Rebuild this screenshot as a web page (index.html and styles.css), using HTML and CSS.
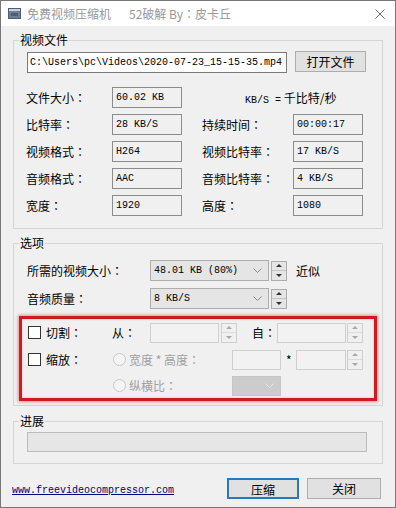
FILE: index.html
```html
<!DOCTYPE html>
<html>
<head>
<meta charset="utf-8">
<title>免费视频压缩机</title>
<link rel="stylesheet" href="styles.css">
</head>
<body>
<div class="window">
  <div class="titlebar">
    <svg class="app-icon" width="13" height="11" viewBox="0 0 13 11">
      <rect x="0.5" y="0.5" width="12" height="10" fill="#6b7f96" stroke="#4d5f74"/>
      <rect x="1" y="1" width="11" height="2" fill="#c9d3de"/>
      <rect x="3" y="5" width="7" height="3" fill="#4d5f74"/>
    </svg>
    <span class="title">免费视频压缩机</span>
    <span class="title title-sub">52破解 By<span class="colon">：</span>皮卡丘</span>
    <svg class="close" width="10" height="10" viewBox="0 0 10 10">
      <path d="M0.5 0.5 L9.5 9.5 M9.5 0.5 L0.5 9.5" stroke="#666" stroke-width="1" fill="none"/>
    </svg>
  </div>

  <fieldset class="group group-file">
    <legend>视频文件</legend>
    <div class="path-row">
      <div class="textbox path">C:\Users\pc\Videos\2020-07-23_15-15-35.mp4</div>
      <button class="btn btn-open">打开文件</button>
    </div>
    <div class="info-grid">
      <span class="lbl">文件大小<span class="colon">：</span></span><div class="field">60.02 KB</div><span></span><span class="note"><span class="note-mono">KB/S =</span> 千比特/秒</span>
      <span class="lbl">比特率<span class="colon">：</span></span><div class="field">28 KB/S</div><span></span><span class="lbl">持续时间<span class="colon">：</span></span><div class="field">00:00:17</div>
      <span class="lbl">视频格式<span class="colon">：</span></span><div class="field">H264</div><span></span><span class="lbl">视频比特率<span class="colon">：</span></span><div class="field">17 KB/S</div>
      <span class="lbl">音频格式<span class="colon">：</span></span><div class="field">AAC</div><span></span><span class="lbl">音频比特率<span class="colon">：</span></span><div class="field">4 KB/S</div>
      <span class="lbl">宽度<span class="colon">：</span></span><div class="field">1920</div><span></span><span class="lbl">高度<span class="colon">：</span></span><div class="field">1080</div>
    </div>
  </fieldset>

  <fieldset class="group group-opts">
    <legend>选项</legend>
    <div class="opt-row">
      <span class="opt-lbl">所需的视频大小<span class="colon">：</span></span>
      <div class="combo"><span class="combo-text">48.01 KB (80%)</span>
        <svg class="chev" width="9" height="5" viewBox="0 0 9 5"><path d="M0.5 0.5 L4.5 4.5 L8.5 0.5" stroke="#8a8a8a" fill="none"/></svg>
      </div>
      <div class="spin"><span class="up"></span><span class="down"></span></div>
      <span class="approx">近似</span>
    </div>
    <div class="opt-row">
      <span class="opt-lbl">音频质量<span class="colon">：</span></span>
      <div class="combo"><span class="combo-text">8 KB/S</span>
        <svg class="chev" width="9" height="5" viewBox="0 0 9 5"><path d="M0.5 0.5 L4.5 4.5 L8.5 0.5" stroke="#8a8a8a" fill="none"/></svg>
      </div>
      <div class="spin"><span class="up"></span><span class="down"></span></div>
    </div>

    <div class="redbox">
      <div class="cut-row">
        <label class="cb-cell"><span class="check"></span><span>切割<span class="colon">：</span></span></label>
        <span class="from-lbl">从<span class="colon">：</span></span>
        <div class="dis-input w69"></div>
        <div class="spin spin-dis gap2"><span class="up"></span><span class="down"></span></div>
        <span class="to-lbl">自<span class="colon">：</span></span>
        <div class="dis-input w69"></div>
        <div class="spin spin-dis gap1"><span class="up"></span><span class="down"></span></div>
      </div>
      <div class="cut-row">
        <label class="cb-cell"><span class="check"></span><span>缩放<span class="colon">：</span></span></label>
        <span class="radio-cell"><span class="radio"></span><span class="dis-text">宽度 * 高度<span class="colon">：</span></span></span>
        <div class="dis-input w49"></div>
        <span class="star">*</span>
        <div class="dis-input w50"></div>
        <div class="spin spin-dis gap1"><span class="up"></span><span class="down"></span></div>
      </div>
      <div class="cut-row row-last">
        <span class="cb-cell"></span>
        <span class="radio-cell"><span class="radio"></span><span class="dis-text">纵横比<span class="colon">：</span></span></span>
        <div class="dis-combo">
          <svg class="chev" width="9" height="5" viewBox="0 0 9 5"><path d="M0.5 0.5 L4.5 4.5 L8.5 0.5" stroke="#e6e6e6" fill="none"/></svg>
        </div>
      </div>
    </div>
  </fieldset>

  <fieldset class="group group-prog">
    <legend>进展</legend>
    <div class="progress"></div>
  </fieldset>

  <div class="bottom-bar">
    <a class="site-link" href="#">www.freevideocompressor.com</a>
    <button class="btn btn-primary">压缩</button>
    <button class="btn btn-close">关闭</button>
  </div>
</div>
</body>
</html>
```

FILE: styles.css
```css
* { box-sizing: border-box; }
html, body { margin: 0; padding: 0; }
body {
  width: 396px;
  height: 508px;
  overflow: hidden;
  background: #f0f0f0;
  font-family: "Noto Sans CJK SC", "Microsoft YaHei", sans-serif;
  font-size: 12px;
  color: #000;
}
.window {
  width: 396px;
  height: 508px;
  border: 1px solid #777;
  background: #f0f0f0;
}
.colon { font-family: "Noto Sans CJK JP", "Noto Sans CJK SC", sans-serif; }

/* title bar */
.titlebar {
  height: 25px;
  background: #fff;
  display: flex;
  align-items: center;
  padding-left: 7px;
}
.app-icon { display: block; margin-right: 6px; }
.title { color: #999; line-height: 16px; }
.title-sub { margin-left: 18px; }
.close { margin-left: auto; margin-right: 10px; display: block; }

/* group boxes */
.group {
  margin: 0 0 0 12px;
  width: 370px;
  padding: 0;
  border: 1px solid #d5d5d5;
  min-width: 0;
}
.group legend {
  margin-left: 5px;
  padding: 0 1px;
  line-height: 16px;
  font-size: 12px;
}
.group-file { margin-top: 6px; height: 197px; }
.group-opts { margin-top: 6px; height: 171px; }
.group-prog { margin-top: 7px; height: 51px; }

/* file group */
.path-row {
  display: flex;
  align-items: flex-start;
  padding: 4px 0 0 13px;
}
.textbox {
  height: 21px;
  border: 1px solid #7a7a7a;
  background: #fff;
  font-family: "Liberation Mono", monospace;
  font-size: 10px;
  line-height: 19px;
  padding-left: 2px;
  white-space: nowrap;
  overflow: hidden;
}
.path { width: 260px; }
.btn {
  height: 21px;
  border: 1px solid #adadad;
  background: #e1e1e1;
  font-family: "Noto Sans CJK SC", sans-serif;
  font-size: 12px;
  color: #000;
  padding: 0;
  line-height: 19px;
}
.btn-open { width: 71px; margin-left: 8px; margin-top: -1px; }

.info-grid {
  display: grid;
  grid-template-columns: 86px 70px 20px 91px 70px;
  grid-auto-rows: 21px;
  row-gap: 6px;
  padding-left: 12px;
  margin-top: 14px;
  align-items: center;
}
.lbl { line-height: 16px; white-space: nowrap; }
.field {
  height: 21px;
  border: 1px solid #8c8c8c;
  font-family: "Liberation Mono", monospace;
  font-size: 10px;
  line-height: 19px;
  padding-left: 3px;
  white-space: nowrap;
}
.note {
  grid-column: 4 / 6;
  padding-left: 43px;
  white-space: nowrap;
  font-size: 12px;
}
.note-mono { font-family: "Liberation Mono", monospace; font-size: 10px; }

/* options group */
.opt-row {
  display: flex;
  align-items: center;
  padding-left: 13px;
  height: 21px;
}
.opt-row:first-of-type { margin-top: 9px; }
.opt-row + .opt-row { margin-top: 7px; }
.opt-lbl { width: 123px; white-space: nowrap; }
.combo {
  width: 119px;
  height: 21px;
  border: 1px solid #adadad;
  background: #e5e5e5;
  display: flex;
  align-items: center;
  padding-left: 3px;
  font-family: "Liberation Mono", monospace;
  font-size: 10px;
}
.combo-text { flex: 1; white-space: nowrap; }
.chev { display: block; margin-right: 6px; }
.spin {
  width: 16px;
  height: 20px;
  border: 1px solid #adadad;
  background: #e5e5e5;
  display: flex;
  flex-direction: column;
  margin-left: 2px;
}
.spin .up, .spin .down {
  flex: 1;
  display: flex;
  align-items: center;
  justify-content: center;
}
.spin .up { border-bottom: 1px solid #c4c4c4; }
.spin .up::after {
  content: "";
  border-left: 3px solid transparent;
  border-right: 3px solid transparent;
  border-bottom: 3px solid #333;
}
.spin .down::after {
  content: "";
  border-left: 3px solid transparent;
  border-right: 3px solid transparent;
  border-top: 3px solid #333;
}
.approx { margin-left: 9px; }

/* highlighted area */
.redbox {
  margin: 7px 0 0 5px;
  width: 358px;
  height: 85px;
  border: 3px solid #cf1b1f;
  box-shadow: 0 0 3px 1px rgba(200, 40, 40, 0.45), inset 0 0 2px rgba(200, 40, 40, 0.35);
}
.cut-row {
  display: flex;
  align-items: center;
  height: 27px;
}
.row-last { height: 25px; }
.cb-cell {
  width: 90px;
  padding-left: 6px;
  display: flex;
  align-items: center;
  gap: 5px;
}
.check {
  width: 13px;
  height: 13px;
  border: 1px solid #333;
  background: #fff;
  display: block;
}
.from-lbl { width: 38px; white-space: nowrap; }
.to-lbl { width: 25px; margin-left: 15px; white-space: nowrap; }
.dis-input {
  height: 20px;
  border: 1px solid #cfcfcf;
  background: #f2f2f2;
}
.w69 { width: 69px; }
.w49 { width: 49px; }
.w50 { width: 50px; }
.spin-dis { border-color: #cfcfcf; background: #f0f0f0; }
.spin-dis .up { border-bottom-color: #dcdcdc; }
.spin-dis .up::after { border-bottom-color: #a8a8a8; }
.spin-dis .down::after { border-top-color: #a8a8a8; }
.gap2 { margin-left: 2px; }
.gap1 { margin-left: 1px; }
.radio-cell {
  width: 120px;
  padding-left: 1px;
  display: flex;
  align-items: center;
  gap: 3px;
}
.radio {
  width: 13px;
  height: 13px;
  border-radius: 50%;
  border: 1px solid #c8c8c8;
  background: #f4f4f4;
  display: block;
}
.dis-text { color: #a0a0a0; white-space: nowrap; }
.star { width: 15px; padding-left: 5px; }
.dis-combo {
  width: 49px;
  height: 20px;
  background: #cccccc;
  border: 1px solid #c6c6c6;
  display: flex;
  align-items: center;
  justify-content: flex-end;
}

/* progress */
.progress {
  margin: 3px 0 0 13px;
  width: 340px;
  height: 20px;
  border: 1px solid #bcbcbc;
  background: #e6e6e6;
}

/* bottom bar */
.bottom-bar {
  display: flex;
  align-items: center;
  margin-top: 14px;
  padding: 0 14px 0 11px;
  height: 21px;
}
.site-link {
  font-family: "Liberation Mono", monospace;
  font-size: 10px;
  color: #00007f;
  text-decoration: underline;
  margin-top: 4px;
}
.btn-primary {
  margin-left: auto;
  width: 72px;
  border: 2px solid #2a78b8;
}
.btn-close { width: 74px; margin-left: 8px; }
```
